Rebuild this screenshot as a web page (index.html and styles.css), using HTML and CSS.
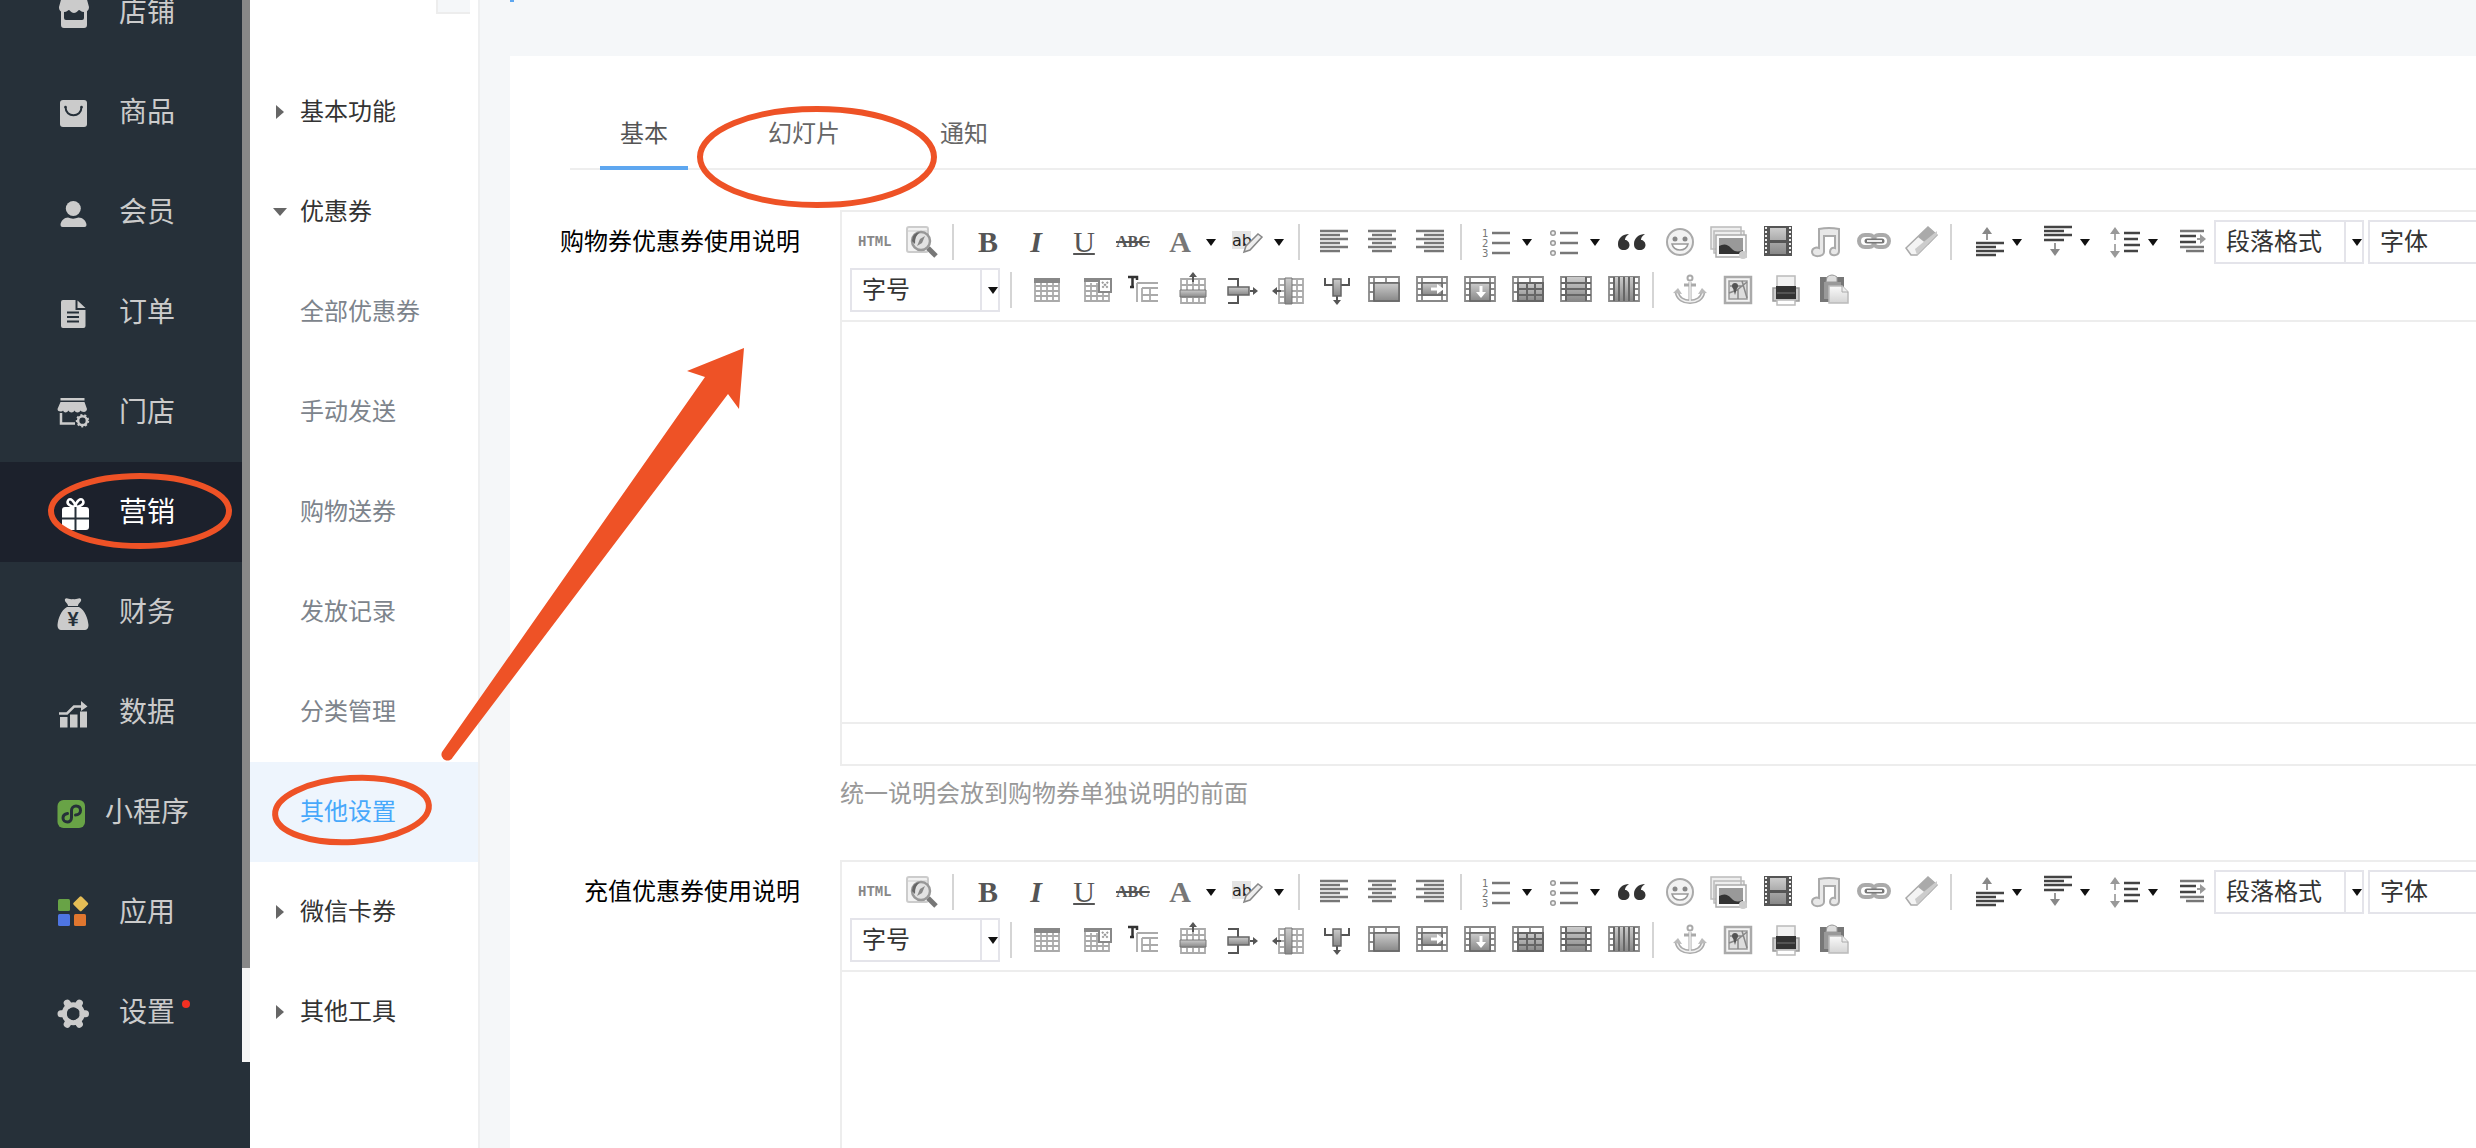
FILE: index.html
```html
<!DOCTYPE html>
<html lang="zh-CN">
<head>
  <meta charset="UTF-8">
  <meta name="viewport" content="width=device-width, initial-scale=1.0">
  <title>优惠券 - 其他设置</title>
  <link rel="stylesheet" href="styles.css">
</head>
<body>
  <div class="layout">
    <!-- 主导航 -->
    <aside class="sidebar">
      <nav class="nav">
        <a href="#" class="nav-item">
          <svg class="nav-icon" viewBox="0 0 32 32"><path d="M5 0h24l3 11c0 4-3 5-5 5-3 0-4-2-5-2s-2 3-5 3-4-3-5-3-2 2-5 2-5-1-5-5z"/><path d="M4 13h3v9q0 2 2 2h16q2 0 2-2v-9h3v16q0 3-3 3H7q-3 0-3-3z"/></svg>
          <span>店铺</span>
        </a>
        <a href="#" class="nav-item">
          <svg class="nav-icon" viewBox="0 0 32 32"><rect x="3" y="4" width="27" height="27" rx="3"/><path class="cut" d="M8.500 11c0 11 16 11 16 0"/><circle class="hole" cx="8.500" cy="11" r="1.300"/><circle class="hole" cx="24.500" cy="11" r="1.300"/></svg>
          <span>商品</span>
        </a>
        <a href="#" class="nav-item">
          <svg class="nav-icon" viewBox="0 0 32 32"><circle cx="16.300" cy="12.500" r="7.500"/><path d="M3.500 29c0-4 4-7.500 7.500-7.500 3 1.500 7 1.500 10.500 0 4 0 8 3.500 8 7.500q0 2-2 2h-22q-2 0-2-2z"/></svg>
          <span>会员</span>
        </a>
        <a href="#" class="nav-item">
          <svg class="nav-icon" viewBox="0 0 32 32"><path d="M6 4h12.500v10h10v16q0 2-2 2H6q-2 0-2-2V6q0-2 2-2zM20.500 4.500l8 7.500h-8z"/><path class="cut" d="M10 16.500h12M10 21h12M10 25.500h12"/></svg>
          <span>订单</span>
        </a>
        <a href="#" class="nav-item">
          <svg class="nav-icon" viewBox="0 0 32 32"><path d="M3.500 2h24v2.500h-24zM3.500 6h24l2.500 7c0 2-2 3-3 3-2 0-3-1-3.500-1.500-1 2.500-5 2.500-6 0-1 2.500-5 2.500-6 0C10 17 7 17 6 14.500 5 16 .5 16 .5 13z"/><path class="line" d="M4 17v10.500h14"/><circle class="line" cx="25.500" cy="24.700" r="4.400"/><circle class="line cog" cx="25.500" cy="24.700" r="5.700"/></svg>
          <span>门店</span>
        </a>
        <a href="#" class="nav-item active">
          <svg class="nav-icon" viewBox="0 0 32 32"><path d="M7 11h22q3 0 3 3v17q0 3-3 3H8q-3 0-3-3V14q0-3 3-3z"/><path class="line" d="M18.300 11C14 11 9 8 11 4.500s7 1 7.300 6.500C19 5 24 1 26 4.500S23 11 18.300 11z"/><path class="cut" d="M5 22.500h27M18.500 11v23"/></svg>
          <span>营销</span>
        </a>
        <a href="#" class="nav-item">
          <svg class="nav-icon" viewBox="0 0 32 32"><path d="M8 3c2-2 4 1 8 0 4 1 6-2 8 0 1 3-3 4-3 7H11C11 7 7 6 8 3zM10 11h12c6 3 9 12 9.500 18 0 4-2 5-4 5h-23c-2 0-4-1-4-5C1 23 4 14 10 11z"/><text class="yen" x="16" y="30">¥</text></svg>
          <span>财务</span>
        </a>
        <a href="#" class="nav-item">
          <svg class="nav-icon" viewBox="0 0 32 32"><path d="M3 21h7.500v10.500H3zM13 18.500h7.500v13H13zM23 15.500h7v16h-7zM24 5l6.500 5.500L24 15z"/><path class="line" d="M2 17.500h8l7-7h8"/></svg>
          <span>数据</span>
        </a>
        <a href="#" class="nav-item">
          <svg class="nav-icon" viewBox="0 0 32 32"><rect class="green" x=".5" y="4" width="27.500" height="28" rx="6"/><path class="cut s-curve" d="M18.500 19c3 0 5-2 5-4.500 0-3-2-4.500-4.500-4.500s-4.500 2-4.500 4.500v7c0 3-2 4.500-4.200 4.500S6 24.500 6 22c0-2.500 2-4 4.500-4.500"/></svg>
          <span>小程序</span>
        </a>
        <a href="#" class="nav-item">
          <svg class="nav-icon" viewBox="0 0 32 32"><rect class="green" x="1" y="3" width="12" height="12" rx="1.500"/><rect class="blue" x="1" y="18" width="12" height="12" rx="1.500"/><rect class="orange" x="17" y="18" width="12" height="12" rx="1.500"/><rect class="yellow" x="18" y="2" width="11.500" height="11.500" rx="1.500" transform="rotate(45 23.700 7.700)"/></svg>
          <span>应用</span>
        </a>
        <a href="#" class="nav-item">
          <svg class="nav-icon" viewBox="0 0 32 32"><circle class="line ring" cx="16.300" cy="17.700" r="9"/><path class="line tooth" d="M26 17.700h2.500M6.500 17.700H4M21.200 9.200l1.200-2.100M11.400 9.200l-1.200-2.100M21.200 26.200l1.200 2.100M11.400 26.200l-1.200 2.100"/></svg>
          <span class="has-dot">设置</span>
        </a>
      </nav>
      <div class="scrollbar"><div class="thumb"></div></div>
    </aside>

    <!-- 二级菜单 -->
    <nav class="submenu">
      <button type="button" class="collapse" aria-label="收起"></button>
      <a href="#" class="menu-title">基本功能</a>
      <a href="#" class="menu-title open">优惠券</a>
      <a href="#" class="menu-link">全部优惠券</a>
      <a href="#" class="menu-link">手动发送</a>
      <a href="#" class="menu-link">购物送券</a>
      <a href="#" class="menu-link">发放记录</a>
      <a href="#" class="menu-link">分类管理</a>
      <a href="#" class="menu-link active">其他设置</a>
      <a href="#" class="menu-title">微信卡券</a>
      <a href="#" class="menu-title">其他工具</a>
    </nav>

    <main class="main">
      <div class="page-mark"></div>
      <section class="panel">
        <div class="tabs">
          <a href="#" class="tab active">基本</a>
          <a href="#" class="tab">幻灯片</a>
          <a href="#" class="tab">通知</a>
        </div>
        <form>
          <div class="form-group">
            <label for="shopping">购物券优惠券使用说明</label>
            <div class="field">
              <div class="editor">
                <div class="toolbar"></div>
                <textarea id="shopping"></textarea>
                <div class="statusbar"></div>
              </div>
              <p class="help">统一说明会放到购物券单独说明的前面</p>
            </div>
          </div>
          <div class="form-group">
            <label for="recharge">充值优惠券使用说明</label>
            <div class="field">
              <div class="editor">
                <div class="toolbar"></div>
                <textarea id="recharge"></textarea>
                <div class="statusbar"></div>
              </div>
            </div>
          </div>
        </form>
      </section>
    </main>
  </div>

  <!-- 操作指引 -->
  <svg class="guide" width="1000" height="900">
    <ellipse cx="140" cy="511" rx="89" ry="35"/>
    <ellipse cx="352" cy="810" rx="77" ry="32" transform="rotate(-3.500 352 810)"/>
    <ellipse cx="817" cy="157" rx="117" ry="48"/>
    <path d="M744 348L687 371L705 377L442 752A6 6 0 0 0 453 757L728 394L739 409Z"/>
  </svg>

  <!-- 编辑器图标 -->
  <svg class="sprite">
    <defs>
      <linearGradient id="g" x2="0" y2="1"><stop offset="0" stop-color="#ccc"/><stop offset="1" stop-color="#888"/></linearGradient>
      <linearGradient id="light" x2="0" y2="1"><stop offset="0" stop-color="#fafafa"/><stop offset="1" stop-color="#d4d4d4"/></linearGradient>
    </defs>
    <symbol id="i-preview" viewBox="0 0 32 32"><rect x="1" y="1" width="21" height="25" rx="2" fill="#f2f2f2" stroke="#ccc" stroke-width="2"/><path d="M2 5h19" stroke="#ccc"/><path d="M22 22l8 8" stroke="#777" stroke-width="5"/><circle cx="15" cy="15" r="9" fill="#e2e2e2" stroke="#999" stroke-width="2.500"/><path d="M6 15q0-8 8-9-3 3-4 5t-1 7z" fill="#666"/><path d="M11 20l3-7 5-3-3 7z" fill="#888"/></symbol>
    <symbol id="i-mark" viewBox="0 0 32 32"><rect x="0" y="5" width="19" height="18" fill="#e4e4e4"/><text x="0" y="20" class="t-ab">ab</text><path d="M12 26l2-6L26 8l4 3-12 13z" fill="#eee" stroke="#888" stroke-width="1.500"/></symbol>
    <symbol id="i-left" viewBox="0 0 32 32"><path class="ln" d="M2 5h28M2 9h20M2 13h28M2 17h20M2 21h28M2 25h20"/></symbol>
    <symbol id="i-center" viewBox="0 0 32 32"><path class="ln" d="M2 5h28M6 9h20M2 13h28M6 17h20M2 21h28M6 25h20"/></symbol>
    <symbol id="i-right" viewBox="0 0 32 32"><path class="ln" d="M2 5h28M10 9h20M2 13h28M10 17h20M2 21h28M10 25h20"/></symbol>
    <symbol id="i-ol" viewBox="0 0 32 32"><path class="ln" d="M12 7h18M12 17h18M12 27h18"/><text class="t-num" x="2" y="11">1</text><text class="t-num" x="2" y="21">2</text><text class="t-num" x="2" y="31">3</text></symbol>
    <symbol id="i-ul" viewBox="0 0 32 32"><path class="ln" d="M12 7h18M12 17h18M12 27h18"/><g fill="#eee" stroke="#999" stroke-width="1.500"><circle cx="5" cy="7" r="2.300"/><circle cx="5" cy="17" r="2.300"/><circle cx="5" cy="27" r="2.300"/></g></symbol>
    <symbol id="i-quote" viewBox="0 0 32 32"><path id="q" d="M13 8C7 8 2 12 2 18c0 4 2 6 6 6 3 0 5.500-2 5.500-5S11 14 9 14c0-3 2-4.500 4-6z" fill="#333"/><use href="#q" x="16"/></symbol>
    <symbol id="i-smile" viewBox="0 0 32 32"><circle cx="16" cy="16" r="13" fill="#f2f2f2" stroke="#aaa" stroke-width="2"/><circle cx="11" cy="13" r="2.500" fill="#888"/><circle cx="21" cy="13" r="2.500" fill="#888"/><path d="M8 18h16c-2 8-14 8-16 0z" fill="#fff" stroke="#999" stroke-width="1.500"/></symbol>
    <symbol id="i-images" viewBox="0 0 32 32"><path d="M-1 1h30v22H-1zM2 5h30v22H2z" fill="#eee" stroke="#bbb" stroke-width="1.500"/><path d="M4 9h30v22H4z" fill="#fafafa" stroke="#aaa" stroke-width="1.500"/><path d="M7 12h24v16H7z" fill="#999"/><path d="M7 20q7-4 12 2t12 2v4H7z" fill="#333"/><circle cx="31" cy="29" r="4" fill="#ccc"/></symbol>
    <symbol id="i-film" viewBox="0 0 32 32"><path d="M4 0h28v30H4z" fill="#555"/><path d="M10 2h16v12H10zM10 17h16v11H10z" fill="url(#g)"/><path d="M6 1v28M30 1v28" stroke="#eee" stroke-width="2" stroke-dasharray="2"/></symbol>
    <symbol id="i-music" viewBox="0 0 32 32"><path d="M11 3q10-2 20 0v22c0 5-9 6-9 1 0-3 2-5 5-4V10H16v16c0 5-12 6-12 0 0-4 4-5 7-4z" fill="#e8e8e8" stroke="#aaa" stroke-width="2"/></symbol>
    <symbol id="i-link" viewBox="0 0 32 32"><rect x="3" y="9" width="16" height="12" rx="6" fill="none" stroke="#aaa" stroke-width="4"/><rect x="17" y="9" width="16" height="12" rx="6" fill="none" stroke="#aaa" stroke-width="4"/><path d="M11 15h15" stroke="#777" stroke-width="5" stroke-linecap="round"/><path d="M11 15h15" stroke="#eee" stroke-width="2"/></symbol>
    <symbol id="i-eraser" viewBox="0 0 32 32"><path d="M2 22L24 1l9 8-20 20H7z" fill="#f4f4f4" stroke="#aaa" stroke-width="1.500"/><path d="M14 11L24 1l9 8-9 10z" fill="#aaa"/><path d="M13 29l-2-6L33 5v4z" fill="#ccc"/></symbol>
    <symbol id="i-up" viewBox="0 0 32 32"><path class="ln dark" d="M6 17h28M6 21h20M6 25h28M6 29h20"/><path d="M17 14V5" stroke="#999" stroke-width="2"/><path d="M12 8l5-7 5 7z" fill="#888"/></symbol>
    <symbol id="i-down" viewBox="0 0 32 32"><path class="ln dark" d="M6 1h28M6 5h20M6 9h28M6 14h20"/><path d="M17 17v8" stroke="#999" stroke-width="2"/><path d="M12 23l5 7 5-7z" fill="#888"/></symbol>
    <symbol id="i-space" viewBox="0 0 32 32"><path class="ln dark" d="M18 7h16M18 13h14M18 19h16M18 25h14"/><path d="M9 14V5M9 18v9" stroke="#aaa" stroke-width="2"/><path d="M4 8l5-7 5 7zM4 25l5 7 5-7z" fill="#999"/></symbol>
    <symbol id="i-indent" viewBox="0 0 32 32"><path class="ln" d="M6 5h24M6 21h24M12 25h18"/><path class="ln dark" d="M6 10h16M6 16h16"/><path d="M23 13h5" stroke="#999" stroke-width="2"/><path d="M26 8l6 5-6 5z" fill="#999"/></symbol>
    <symbol id="i-table" viewBox="0 0 32 32"><path class="grid" d="M5 5h24v22H5zM5 12h24M5 17h24M5 22h24M11 9v18M17 9v18M23 9v18"/><path d="M4 4h26v5H4z" fill="#888"/></symbol>
    <symbol id="i-tabledel" viewBox="0 0 32 32"><path class="grid" d="M7 5h24v22H7zM7 12h24M7 17h24M7 22h24M13 9v18M19 9v18M25 9v18"/><path d="M6 4h16v4H6z" fill="#888"/><path d="M21 5h12v13H21z" fill="#fff" stroke="#888" stroke-width="2"/><path d="M24 8l6 6M30 8l-6 6" stroke="#999" stroke-width="2" stroke-dasharray="2 1"/></symbol>
    <symbol id="i-cell" viewBox="0 0 32 32"><path class="grid" d="M11 9h21M11 9v19M16 14h16M16 14v14M16 21h16M16 27h16M24 14v14"/><path d="M2 3h9v3M6.500 3v10M4 13h4" fill="none" stroke="#333" stroke-width="2.500"/></symbol>
    <symbol id="i-rowin" viewBox="0 0 32 32"><path class="grid" d="M7 5h24v24H7zM7 11h24M7 23h24M13 5v24M19 5v24M25 5v24"/><path d="M6 16h26v7H6z" fill="url(#g)" stroke="#777"/><path d="M19 8V1" stroke="#555" stroke-width="2"/><path d="M15 3l4-5 4 5z" fill="#555"/></symbol>
    <symbol id="i-rowright" viewBox="0 0 32 32"><path d="M6 5h10v8M6 29h10v-8M28 17h5" fill="none" stroke="#555" stroke-width="2"/><path d="M6 13h21v8H6z" fill="url(#g)" stroke="#666" stroke-width="1.500"/><path d="M31 13l5 4-5 4z" fill="#555"/></symbol>
    <symbol id="i-colin" viewBox="0 0 32 32"><path class="grid" d="M9 5h24v24H9zM9 11h24M9 17h24M9 23h24M15 5v24M27 5v24"/><path d="M15 4h7v26h-7z" fill="url(#g)" stroke="#777"/><path d="M6 17h5" stroke="#555" stroke-width="2"/><path d="M7 13l-5 4 5 4z" fill="#555"/></symbol>
    <symbol id="i-coldown" viewBox="0 0 32 32"><path d="M7 4v7h8M31 4v7h-8M19 22v5" fill="none" stroke="#555" stroke-width="2"/><path d="M15 5h8v17h-8z" fill="url(#g)" stroke="#666" stroke-width="1.500"/><path d="M15 26l4 5 4-5z" fill="#555"/></symbol>
    <symbol id="i-merge" viewBox="0 0 32 32"><path class="grid dk" d="M3 3h30v24H3zM3 9h30M8 3v24M20 3v6M3 18h5"/><path d="M8 9h25v18H8z" fill="url(#g)" stroke="#666" stroke-width="1.500"/></symbol>
    <symbol id="i-mright" viewBox="0 0 32 32"><path class="grid dk" d="M3 3h30v24H3zM3 9h30M3 21h30M3 15h5M8 3v24M28 3v24"/><path d="M8 9h20v12H8z" fill="url(#g)" stroke="#666" stroke-width="1.500"/><path d="M17 15h8" stroke="#fff" stroke-width="3"/><path d="M23 10l7 5-7 5z" fill="#fff"/></symbol>
    <symbol id="i-mdown" viewBox="0 0 32 32"><path class="grid dk" d="M3 3h30v24H3zM3 9h30M3 15h5M3 21h5M28 15h5M28 21h5M8 3v24M28 3v24"/><path d="M8 9h20v18H8z" fill="url(#g)" stroke="#666" stroke-width="1.500"/><path d="M19 12v8" stroke="#fff" stroke-width="3"/><path d="M14 18l5 6 5-6z" fill="#fff"/></symbol>
    <symbol id="i-split" viewBox="0 0 32 32"><path class="grid dk" d="M3 3h30v24H3zM3 9h30M8 3v24M20 3v6M3 18h5"/><path d="M8 9h25v18H8z" fill="url(#g)"/><path d="M8 9h25v18H8zM8 15h25M8 21h25M17 9v18M25 9v18" fill="none" stroke="#666" stroke-width="2"/></symbol>
    <symbol id="i-rows" viewBox="0 0 32 32"><path class="grid dk" d="M3 3h30v24H3z"/><path d="M8 3h20v24H8z" fill="url(#g)"/><path class="over" d="M3 9h30M3 15h30M3 21h30M8 3v24M28 3v24"/></symbol>
    <symbol id="i-cols" viewBox="0 0 32 32"><path class="grid dk" d="M3 3h30v24H3zM3 9h30M3 15h30M3 21h30"/><path d="M8 3h20v24H8z" fill="url(#g)"/><path class="over" d="M8 3v24M13 3v24M18 3v24M23 3v24M28 3v24"/></symbol>
    <symbol id="i-anchor" viewBox="0 0 32 32"><g fill="none" stroke="#aaa" stroke-width="4.500"><circle cx="18" cy="4" r="2.500" stroke-width="2"/><path d="M18 8v19M12 11h12" stroke-width="3"/><path d="M5 18c1 13 25 13 26 0"/></g><path d="M18 8v19M5 18c1 13 25 13 26 0" fill="none" stroke="#f0f0f0" stroke-width="1.500"/><path d="M1 19l5-5 4 6M35 19l-5-5-4 6" fill="#bbb"/></symbol>
    <symbol id="i-map" viewBox="0 0 32 32"><rect x="5" y="3" width="26" height="26" fill="#f4f4f4" stroke="#aaa" stroke-width="2.500"/><path d="M9 7h18v18H9z" fill="#ddd" stroke="#999" stroke-width="1.500"/><path d="M9 19l8-3 10-8M18 15v10M10 12h14M22 7l5 17" stroke="#888" stroke-width="1.500" fill="none"/><circle cx="15" cy="12" r="3" fill="#555"/><path d="M13 14h4l-2 7z" fill="#555"/></symbol>
    <symbol id="i-print" viewBox="0 0 32 32"><path d="M9 2h18v11H9z" fill="#f2f2f2" stroke="#bbb" stroke-width="1.500"/><path d="M5 14h26v13H5z" fill="#ccc" stroke="#999" stroke-width="1.500"/><path d="M8 12h20v13H8z" fill="#333"/><path d="M9 19h18" stroke="#777"/><path d="M9 26h18v5H9z" fill="#fff" stroke="#bbb" stroke-width="1.500"/></symbol>
    <symbol id="i-paste" viewBox="0 0 32 32"><path d="M4 3h24v25H4z" fill="#777"/><path d="M8 8h17v17H8z" fill="#999"/><path d="M11 3q5-4 10 0v5H10z" fill="#ddd" stroke="#999"/><path d="M13 12h13l6 6v11H13z" fill="url(#light)" stroke="#bbb" stroke-width="1.500"/><path d="M26 12v6h6" fill="#eee" stroke="#aaa"/></symbol>
  </svg>

  <script>
    // "-" 是分隔符, 末尾的 "v" 表示带下拉箭头
    const rows = [
      ["HTML", "preview", "-", "B", "I", "U", "ABC", "A v", "mark v", "-",
        "left", "center", "right", "-", "ol v", "ul v", "quote", "smile", "images", "film",
        "music", "link", "eraser", "-", "up v", "down v", "space v", "indent",
        "@段落格式", "@字体"],
      ["@字号", "-", "table", "tabledel", "cell", "rowin", "rowright", "colin", "coldown",
        "merge", "mright", "mdown", "split", "rows", "cols", "-",
        "anchor", "map", "print", "paste"]
    ];
    const textTools = ["HTML", "B", "I", "U", "ABC", "A"];

    function renderTool(item) {
      if (item === "-") return '<span class="sep"></span>';
      if (item[0] === "@") {
        const name = item.slice(1);
        return `<span class="combo"><select aria-label="${name}"><option>${name}</option></select><i class="combo-arrow"></i></span>`;
      }
      const [name, drop] = item.split(" ");
      const face = textTools.includes(name)
        ? `<span class="face face-${name.toLowerCase()}">${name}</span>`
        : `<svg class="tool-icon"><use href="#i-${name}"/></svg>`;
      return `<button type="button" class="tool${drop ? " drop" : ""}" aria-label="${name}">${face}</button>`;
    }

    document.querySelectorAll(".toolbar").forEach(bar => {
      bar.innerHTML = rows.map(row => `<div class="tool-row">${row.map(renderTool).join("")}</div>`).join("");
    });
  </script>
</body>
</html>
```
FILE: styles.css
```css
* { box-sizing: border-box; }
body {
  margin: 0;
  position: relative;
  font-family: "Noto Sans CJK SC", "Noto Sans", sans-serif;
  font-size: 24px;
  line-height: 36px;
  color: #333;
  background: #f5f7f9;
}
a { color: inherit; text-decoration: none; }
button, select, textarea { font: inherit; color: inherit; }
.layout {
  display: flex;
  height: 100vh;
  overflow: hidden;
}

/* 主导航 */
.sidebar {
  flex: none;
  display: flex;
  width: 250px;
  background: #263039;
}
.nav {
  flex: 1;
  margin-top: -38px;
}
.nav-item {
  display: flex;
  align-items: center;
  height: 100px;
  padding-left: 57px;
  font-size: 28px;
  color: #cbcbcb;
}
.nav-item span {
  width: 116px;
  padding-bottom: 4px;
  text-align: center;
}
.nav-item.active { background: #1c212c; color: #fff; }
.nav-icon {
  width: 32px;
  height: 32px;
  overflow: visible;
  fill: currentColor;
}
.nav-icon .cut { fill: none; stroke: #263039; stroke-width: 2; }
.nav-icon .s-curve { stroke-width: 3; stroke-linecap: round; }
.nav-icon .hole { fill: #263039; }
.nav-icon .line { fill: none; stroke: currentColor; stroke-width: 2.5; }
.nav-icon .cog { stroke-width: 2; stroke-dasharray: 2; }
.nav-icon .ring { stroke-width: 5; }
.nav-icon .tooth { stroke-width: 7; stroke-linecap: round; }
.nav-icon .yen {
  fill: #263039;
  font-family: "Liberation Sans", sans-serif;
  font-size: 20px;
  font-weight: bold;
  text-anchor: middle;
}
.nav-icon .green { fill: #68a346; }
.nav-icon .blue { fill: #4e75e2; }
.nav-icon .orange { fill: #e0762f; }
.nav-icon .yellow { fill: #e5bd56; }
.has-dot { position: relative; }
.has-dot::after {
  content: "";
  position: absolute;
  top: 8px;
  right: 15px;
  width: 8px;
  height: 8px;
  border-radius: 50%;
  background: #f23022;
}
.scrollbar {
  width: 8px;
  height: calc(100% - 86px);
  background: #f5f5f5;
}
.thumb { height: calc(100% - 94px); background: #888; }

/* 二级菜单 */
.submenu {
  flex: none;
  width: 230px;
  background: #fff;
  border-right: 2px solid #eeeff0;
}
.collapse {
  display: block;
  width: 34px;
  height: 14px;
  margin: 0 8px 48px auto;
  padding: 0;
  border: solid #ededed;
  border-width: 0 0 2px 2px;
  background: #f5f7f9;
}
.menu-title, .menu-link {
  display: flex;
  align-items: center;
  height: 100px;
  padding: 0 0 4px 50px;
}
.menu-title { padding-left: 22px; }
.menu-title::before {
  content: "";
  margin: 4px 16px 0 4px;
  border: solid transparent;
  border-width: 7px 0 7px 8px;
  border-left-color: #666;
}
.menu-title.open::before {
  margin: 4px 13px 0 1px;
  border-width: 8px 7px 0;
  border-color: #666 transparent;
}
.menu-link { color: #7d848c; }
.menu-link.active { background: #eef5fd; color: #47a8fb; }

/* 内容区 */
.main {
  flex: 1;
  min-width: 0;
  overflow: hidden;
  padding-left: 30px;
}
.page-mark { width: 4px; height: 2px; margin-bottom: 54px; background: #5ea7f0; }
.panel {
  padding: 42px 0 48px 30px;
  background: #fff;
}
.tabs {
  display: flex;
  gap: 60px;
  margin: 0 0 40px 30px;
  padding-left: 30px;
  border-bottom: 2px solid #eee;
}
.tab {
  height: 72px;
  margin-bottom: -2px;
  padding: 16px 20px 0;
  color: #666;
}
.tab.active { border-bottom: 4px solid #5ea7f0; color: #555; }
.form-group {
  display: flex;
  gap: 40px;
  margin-bottom: 50px;
}
.form-group label {
  flex: none;
  width: 260px;
  padding-top: 12px;
  text-align: right;
  color: #000;
}
/* 编辑器比窗口宽, 右侧被裁掉 */
.field { flex: 1; min-width: 0; margin-right: -80px; }
.help { margin: 8px 0 0; color: #999; }

/* 编辑器 */
.editor { border: 2px solid #ededed; }
.toolbar {
  display: grid;
  gap: 4px;
  padding: 8px;
  border-bottom: 2px solid #ededed;
}
.tool-row { display: flex; height: 44px; }
.tool {
  flex: none;
  display: flex;
  align-items: center;
  width: 48px;
  padding: 0 0 0 8px;
  border: 0;
  background: none;
}
.tool.drop { width: 68px; }
.tool.drop::after, .combo-arrow::after {
  content: "";
  border: solid transparent;
  border-width: 7px 5px 0;
  border-top-color: #111;
}
.tool.drop::after { margin-left: 10px; }
.tool-icon { flex: none; width: 32px; height: 32px; overflow: visible; }
.tool-icon symbol, symbol { overflow: visible; }
.face {
  flex: none;
  width: 32px;
  text-align: center;
  font-family: "Liberation Serif", serif;
  font-size: 30px;
  color: #555;
}
.face-html {
  font-family: "Liberation Mono", monospace;
  font-size: 14px;
  font-weight: bold;
  color: #888;
}
.face-b { font-weight: bold; }
.face-i { font-weight: bold; font-style: italic; }
.face-u { text-decoration: underline 2px; }
.face-abc { font-size: 16px; font-weight: bold; text-decoration: line-through 2px; }
.face-a { font-weight: bold; color: #777; }
.sep { flex: none; width: 18px; padding: 4px 10px 4px 6px; }
.sep::before {
  content: "";
  display: block;
  height: 36px;
  background: #d5d5d5;
}
.combo {
  flex: none;
  display: flex;
  width: 150px;
  margin-right: 4px;
  border: 2px solid #e4e4ea;
}
.combo select {
  flex: 1;
  min-width: 0;
  padding: 0 0 4px 10px;
  border: 0;
  appearance: none;
  background: #fff;
  line-height: 36px;
}
.combo-arrow {
  display: flex;
  align-items: center;
  justify-content: flex-end;
  width: 18px;
  border-left: 2px solid #e4e4ea;
}
.editor textarea {
  display: block;
  width: 100%;
  height: 400px;
  padding: 10px;
  border: 0;
  outline: 0;
  resize: none;
}
.statusbar { height: 42px; border-top: 2px solid #ededed; }

.ln { fill: none; stroke: #777; stroke-width: 2.3; }
.ln.dark { stroke: #444; }
.grid { fill: #fff; stroke: #aaa; stroke-width: 1.8; }
.grid.dk { stroke: #888; }
.over { fill: none; stroke: #666; stroke-width: 2; }
.t-ab { font-family: "DejaVu Sans", sans-serif; font-size: 16px; fill: #222; }
.t-num { font-family: "DejaVu Sans", sans-serif; font-size: 10px; fill: #777; }
.sprite { position: absolute; width: 0; height: 0; }

/* 指引标记 */
.guide {
  position: absolute;
  top: 0;
  left: 0;
  pointer-events: none;
  fill: #ee5226;
}
.guide ellipse { fill: none; stroke: #ee5226; stroke-width: 6; }
```
